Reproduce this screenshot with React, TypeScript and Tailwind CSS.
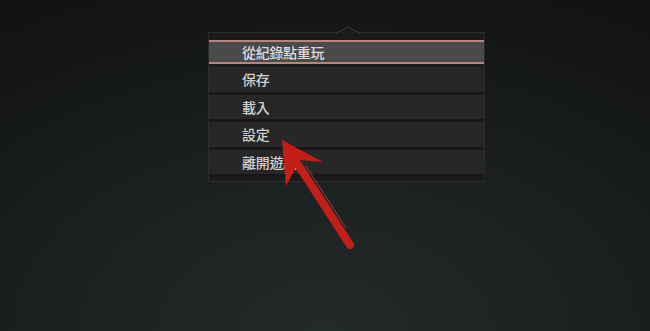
import React from "react";

const items = ["保存", "載入", "設定", "離開遊戲"];

export default function App() {
  return (
    <div className="relative w-[650px] h-[331px] overflow-hidden bg-[radial-gradient(ellipse_90%_110%_at_50%_100%,#232a2a_0%,#1a1e1e_55%,#121313_100%)] font-['Noto_Sans_CJK_TC','Noto_Sans',sans-serif]">
      <div className="pt-[32px] pl-[208px]">
        {/* Menu panel */}
        <div className="relative w-[277px] h-[150px] border border-[#2c2c2c] bg-[#1b1b1b] pt-[7px]">
          {/* notch */}
          <svg className="absolute left-[127px] top-[-7px]" width="24" height="8" viewBox="0 0 24 8">
            <path d="M0 7.5 L12 1 L24 7.5" fill="#1b1b1b" stroke="#3a3a3a" strokeWidth="1" />
          </svg>
          <div className="h-[24px] bg-[#4a4a4a] border-y-2 border-[#b98578] flex items-center pl-[33px]">
            <span className="text-[14px] leading-none font-medium text-[#dcdcdc] tracking-[-0.3px]">從紀錄點重玩</span>
          </div>
          <div className="mt-[3px]">
            {items.map((t) => (
              <div
                key={t}
                className="h-[27.5px] bg-[#272727] border-b-[3px] border-[#171717] flex items-center pl-[33px]"
              >
                <span className="text-[14px] leading-none font-medium text-[#d2d2d2] tracking-[-0.3px]">{t}</span>
              </div>
            ))}
          </div>
        </div>
      </div>

      {/* red annotation arrow */}
      <svg className="absolute inset-0" width="650" height="331" viewBox="0 0 650 331">
        <line x1="297" y1="163" x2="350" y2="245" stroke="#c41e18" strokeWidth="8" strokeLinecap="round" />
        <line x1="306" y1="166" x2="346" y2="228" stroke="#e05a55" strokeWidth="1" opacity="0.6" />
        <polygon points="282,140 323,162 300,160 286,186" fill="#c41e18" />
      </svg>
    </div>
  );
}
